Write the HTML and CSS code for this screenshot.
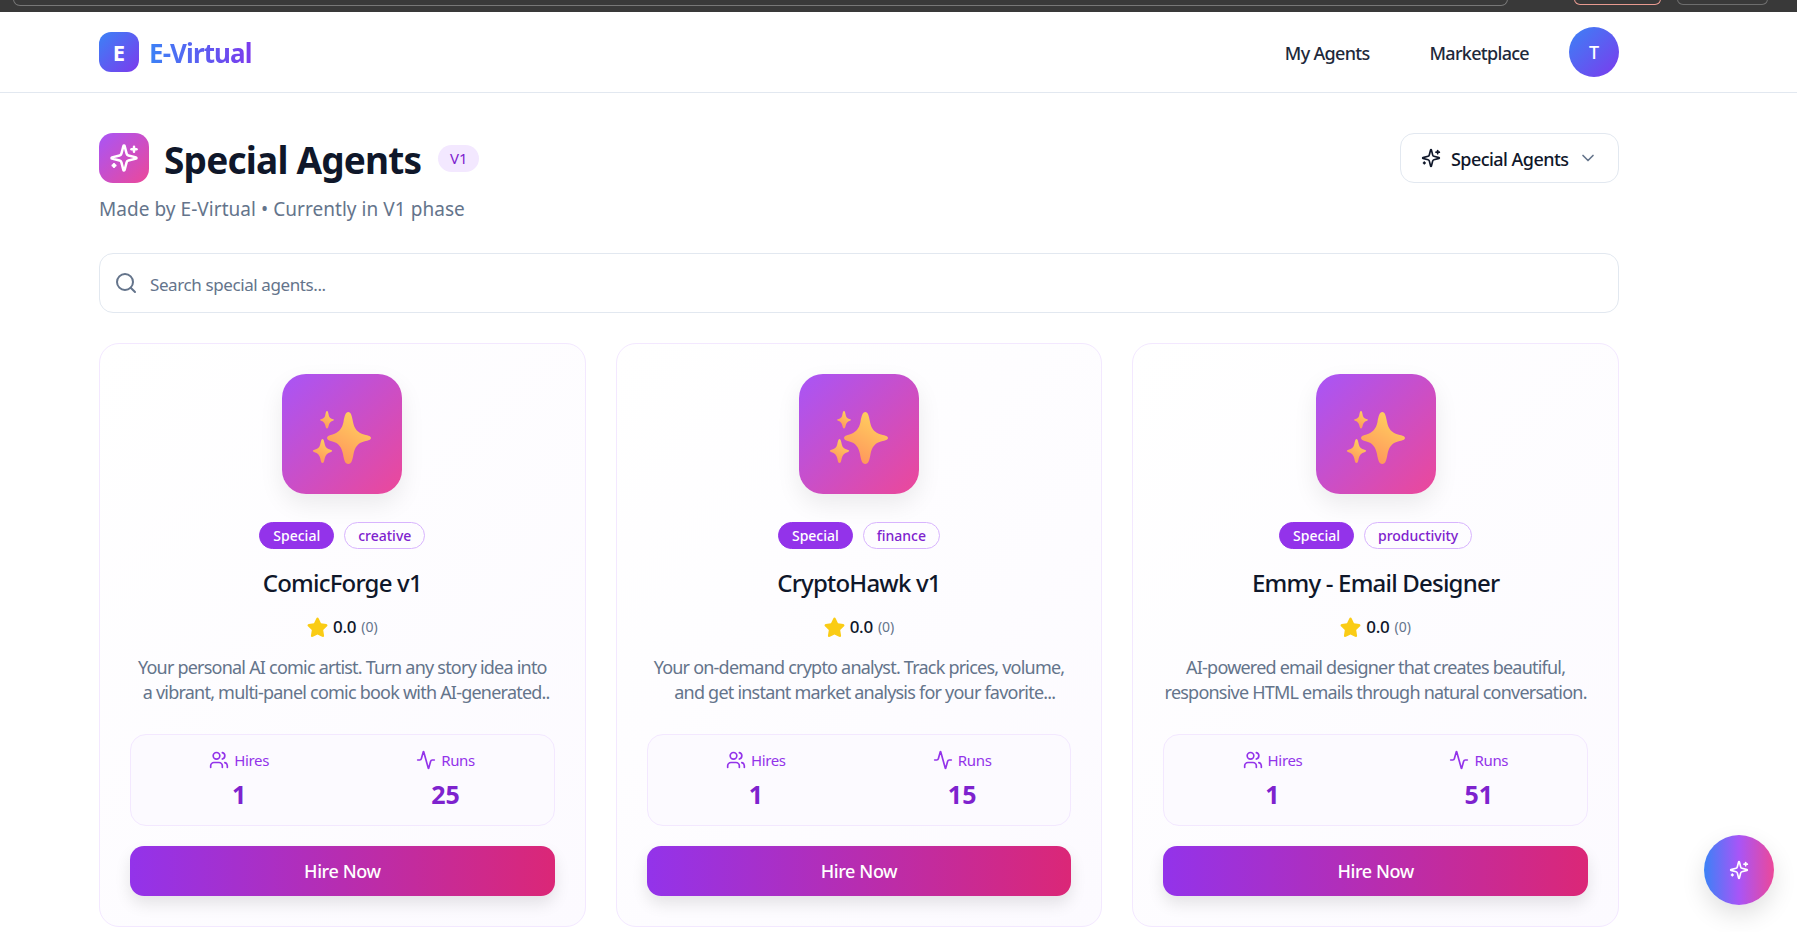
FILE: index.html
```html
<!DOCTYPE html>
<html lang="en">
<head>
    <meta charset="UTF-8">
    <meta name="viewport" content="width=device-width, initial-scale=1.0">
    <title>E-Virtual Special Agents</title>
    <link rel="stylesheet" href="styles.css">
</head>
<body>
    <svg class="icon-defs" width="0" height="0" aria-hidden="true">
        <defs>
            <linearGradient id="sparkle-fill" x1="0.75" y1="0" x2="0.25" y2="1">
                <stop offset="0" stop-color="#ffd35e"/>
                <stop offset="1" stop-color="#ff935c"/>
            </linearGradient>
            <symbol id="i-sparkles" viewBox="0 0 24 24">
                <path d="M9.937 15.5A2 2 0 0 0 8.5 14.063l-6.135-1.582a.5.5 0 0 1 0-.962L8.5 9.936A2 2 0 0 0 9.937 8.5l1.582-6.135a.5.5 0 0 1 .963 0L14.063 8.5A2 2 0 0 0 15.5 9.937l6.135 1.581a.5.5 0 0 1 0 .964L15.5 14.063a2 2 0 0 0-1.437 1.437l-1.582 6.135a.5.5 0 0 1-.963 0z"/>
                <path d="M20 3v4"/><path d="M22 5h-4"/><path d="M4 17v2"/><path d="M5 18H3"/>
            </symbol>
            <symbol id="i-users" viewBox="0 0 24 24">
                <path d="M16 21v-2a4 4 0 0 0-4-4H6a4 4 0 0 0-4 4v2"/><circle cx="9" cy="7" r="4"/>
                <path d="M22 21v-2a4 4 0 0 0-3-3.87"/><path d="M16 3.13a4 4 0 0 1 0 7.75"/>
            </symbol>
            <symbol id="i-activity" viewBox="0 0 24 24">
                <path d="M22 12h-2.48a2 2 0 0 0-1.93 1.46l-2.35 8.36a.25.25 0 0 1-.48 0L9.24 2.18a.25.25 0 0 0-.48 0l-2.35 8.36A2 2 0 0 1 4.49 12H2"/>
            </symbol>
            <symbol id="i-emoji" viewBox="0 0 64 64">
                <path fill="url(#sparkle-fill)" d="M38.3 10C41 10 42 14 43 20C44.5 27 47.5 30.5 54 32.5C59 33.5 61 34.5 61 36C61 37.5 59 38.5 54 39.5C48 41 45 45 43.5 52C42.5 58 41.5 62 38.3 62C35 62 34 58 33 52C31.5 45 28.5 41 22.5 39.5C18.5 38.5 17 37.5 17 36C17 34.5 18.5 33.5 22.5 32.5C28.5 30.5 32 27 33.5 20C34.5 14 35.6 10 38.3 10Z"/>
                <path fill="url(#sparkle-fill)" d="M17 9C18 9 18.3 11 18.8 13.5C19.3 15.8 21 16.8 23 17.3C24.3 17.6 24.3 18.4 23 18.7C21 19.2 19.4 20.5 18.8 23C18.3 25 18 26.5 17 26.5C16 26.5 15.7 25 15.2 23C14.6 20.5 13 19.2 11 18.7C9.7 18.4 9.7 17.6 11 17.3C13 16.8 14.7 15.8 15.2 13.5C15.7 11 16 9 17 9Z"/>
                <path fill="url(#sparkle-fill)" d="M12.5 37C13.8 37 14.2 39.5 14.8 42.5C15.4 45.5 17.5 47 20.5 47.8C22.8 48.4 22.8 49.6 20.5 50.2C17.5 51 15.5 52.8 14.8 56C14.2 59 13.8 61 12.5 61C11.2 61 10.8 59 10.2 56C9.5 52.8 7.5 51 4.5 50.2C2.2 49.6 2.2 48.4 4.5 47.8C7.5 47 9.6 45.5 10.2 42.5C10.8 39.5 11.2 37 12.5 37Z"/>
            </symbol>
            <symbol id="i-star" viewBox="0 0 24 24">
                <path d="M12 1.8c.6 0 1.1.4 1.4 1l2.6 5.5 6 .9c1.3.2 1.8 1.7.9 2.6l-4.4 4.3 1 6.1c.2 1.3-1.1 2.2-2.3 1.6L12 21l-5.2 2.800c-1.2.6-2.5-.3-2.3-1.6l1-6.100-4.400-4.300c-.9-.9-.4-2.400.9-2.600l6-.9 2.600-5.500c.3-.6.8-1 1.400-1z"/>
            </symbol>
        </defs>
    </svg>

    <div class="browser-strip">
        <span class="strip-address"></span>
        <span class="strip-pill strip-pill-red"></span>
        <span class="strip-pill strip-pill-grey"></span>
    </div>

    <header class="topbar">
        <div class="topbar-inner">
            <a class="brand" href="#">
                <span class="brand-mark">E</span>
                <span class="brand-name">E-Virtual</span>
            </a>
            <nav class="nav">
                <a href="#">My Agents</a>
                <a href="#">Marketplace</a>
                <span class="avatar">T</span>
            </nav>
        </div>
    </header>

    <main class="page">
        <div class="page-head">
            <div>
                <div class="title-row">
                    <span class="title-icon"><svg class="line-icon"><use href="#i-sparkles"/></svg></span>
                    <h1>Special Agents</h1>
                    <span class="phase-badge">V1</span>
                </div>
                <p class="subtitle">Made by E-Virtual • Currently in V1 phase</p>
            </div>
            <button class="category-select" type="button">
                <svg class="line-icon select-icon"><use href="#i-sparkles"/></svg>
                <span class="select-text">Special Agents</span>
                <svg class="line-icon select-chevron" viewBox="0 0 24 24"><path d="m6 9 6 6 6-6"/></svg>
            </button>
        </div>

        <label class="search">
            <svg class="line-icon search-icon" viewBox="0 0 24 24"><circle cx="11" cy="11" r="8"/><path d="m21 21-4.3-4.3"/></svg>
            <input type="text" placeholder="Search special agents...">
        </label>

        <section class="agent-grid">
            <article class="agent-card">
                <div class="agent-icon"><svg class="emoji-icon"><use href="#i-emoji"/></svg></div>
                <div class="tags"><span class="tag tag-solid">Special</span><span class="tag">creative</span></div>
                <h2>ComicForge v1</h2>
                <div class="rating"><svg class="star"><use href="#i-star"/></svg><b>0.0</b><small>(0)</small></div>
                <p class="agent-desc">Your personal AI comic artist. Turn any story idea into<br>&nbsp;&nbsp;a vibrant, multi-panel comic book with AI-generated..</p>
                <div class="stats">
                    <div class="stat">
                        <div class="stat-label"><svg class="line-icon"><use href="#i-users"/></svg>Hires</div>
                        <div class="stat-value">1</div>
                    </div>
                    <div class="stat">
                        <div class="stat-label"><svg class="line-icon"><use href="#i-activity"/></svg>Runs</div>
                        <div class="stat-value">25</div>
                    </div>
                </div>
                <button class="hire-btn" type="button">Hire Now</button>
            </article>

            <article class="agent-card">
                <div class="agent-icon"><svg class="emoji-icon"><use href="#i-emoji"/></svg></div>
                <div class="tags"><span class="tag tag-solid">Special</span><span class="tag">finance</span></div>
                <h2>CryptoHawk v1</h2>
                <div class="rating"><svg class="star"><use href="#i-star"/></svg><b>0.0</b><small>(0)</small></div>
                <p class="agent-desc">Your on-demand crypto analyst. Track prices, volume,<br>&nbsp;&nbsp;&nbsp;and get instant market analysis for your favorite...</p>
                <div class="stats">
                    <div class="stat">
                        <div class="stat-label"><svg class="line-icon"><use href="#i-users"/></svg>Hires</div>
                        <div class="stat-value">1</div>
                    </div>
                    <div class="stat">
                        <div class="stat-label"><svg class="line-icon"><use href="#i-activity"/></svg>Runs</div>
                        <div class="stat-value">15</div>
                    </div>
                </div>
                <button class="hire-btn" type="button">Hire Now</button>
            </article>

            <article class="agent-card">
                <div class="agent-icon"><svg class="emoji-icon"><use href="#i-emoji"/></svg></div>
                <div class="tags"><span class="tag tag-solid">Special</span><span class="tag">productivity</span></div>
                <h2>Emmy - Email Designer</h2>
                <div class="rating"><svg class="star"><use href="#i-star"/></svg><b>0.0</b><small>(0)</small></div>
                <p class="agent-desc">AI-powered email designer that creates beautiful,<br>responsive HTML emails through natural conversation.</p>
                <div class="stats">
                    <div class="stat">
                        <div class="stat-label"><svg class="line-icon"><use href="#i-users"/></svg>Hires</div>
                        <div class="stat-value">1</div>
                    </div>
                    <div class="stat">
                        <div class="stat-label"><svg class="line-icon"><use href="#i-activity"/></svg>Runs</div>
                        <div class="stat-value">51</div>
                    </div>
                </div>
                <button class="hire-btn" type="button">Hire Now</button>
            </article>
        </section>
    </main>

    <button class="float-btn" type="button" aria-label="Assistant"><svg class="line-icon"><use href="#i-sparkles"/></svg></button>
</body>
</html>
```

FILE: styles.css
```css
* {
    box-sizing: border-box;
}
html, body {
    height: 100%;
}
body {
    margin: 0;
    overflow: hidden;
    background: #fff;
    color: #0f172a;
    font-family: "Noto Sans", "Open Sans", sans-serif;
}
a {
    color: inherit;
    text-decoration: none;
}
h1, h2, p {
    margin: 0;
}
button {
    font-family: inherit;
    cursor: pointer;
}
.icon-defs {
    display: block;
    height: 0;
}
.line-icon {
    fill: none;
    stroke: currentColor;
    stroke-width: 2;
    stroke-linecap: round;
    stroke-linejoin: round;
    flex: none;
}

.browser-strip {
    display: flex;
    height: 12px;
    overflow: hidden;
    background: #393939;
    padding: 0 29px 0 13px;
}
.strip-address {
    flex: 1;
    height: 7px;
    margin-top: -1px;
    margin-right: 66px;
    border: 1px solid #777;
    border-top: none;
    border-radius: 0 0 14px 14px;
}
.strip-pill {
    height: 6px;
    margin-top: -1px;
    border: 1px solid #6d6d6d;
    border-radius: 0 0 12px 12px;
}
.strip-pill-red {
    width: 87px;
    margin-right: 16px;
    border-color: #e89a90;
}
.strip-pill-grey {
    width: 91px;
}

.topbar {
    height: 81px;
    border-bottom: 1px solid #e2e8f0;
}
.topbar-inner {
    width: 1520px;
    height: 80px;
    margin-left: 99px;
    display: flex;
    align-items: center;
    justify-content: space-between;
}
.brand {
    display: flex;
    align-items: center;
    gap: 10px;
}
.brand-mark {
    width: 40px;
    height: 40px;
    border-radius: 12px;
    display: flex;
    align-items: center;
    justify-content: center;
    background: linear-gradient(135deg, #3b82f6, #7c3aed);
    color: #fff;
    font-size: 22px;
    font-weight: 700;
}
.brand-name {
    padding-top: 2px;
    font-size: 26px;
    font-weight: 700;
    letter-spacing: -0.9px;
    background: linear-gradient(90deg, #3b82f6, #7c3aed);
    -webkit-background-clip: text;
    background-clip: text;
    color: transparent;
}
.nav {
    display: flex;
    align-items: center;
    gap: 60px;
    font-size: 18px;
    font-weight: 500;
    letter-spacing: -0.7px;
    color: #1e293b;
}
.nav a {
    padding-top: 2px;
}
.nav .avatar {
    margin-left: -20px;
}
.avatar {
    width: 50px;
    height: 50px;
    border-radius: 50%;
    display: flex;
    align-items: center;
    justify-content: center;
    background: linear-gradient(135deg, #3b82f6, #7c3aed);
    color: #fff;
    font-size: 18px;
    letter-spacing: 0;
}

.page {
    width: 1520px;
    margin-left: 99px;
    padding-top: 40px;
}
.page-head {
    display: flex;
    justify-content: space-between;
    align-items: flex-start;
}
.title-row {
    display: flex;
    align-items: center;
    height: 50px;
}
.title-icon {
    width: 50px;
    height: 50px;
    border-radius: 14px;
    display: flex;
    align-items: center;
    justify-content: center;
    color: #fff;
    background: linear-gradient(135deg, #a855f7, #ec4899);
}
.title-icon .line-icon {
    width: 30px;
    height: 30px;
}
h1 {
    margin-left: 15px;
    padding-top: 4px;
    font-size: 37px;
    font-weight: 700;
    line-height: 46px;
    letter-spacing: -0.8px;
    color: #0f172a;
}
.phase-badge {
    margin-left: 17px;
    height: 27px;
    width: 41px;
    border-radius: 14px;
    display: flex;
    align-items: center;
    justify-content: center;
    background: #f3e8ff;
    color: #7e22ce;
    font-size: 15px;
}
.subtitle {
    margin-top: 14px;
    font-size: 19px;
    line-height: 24px;
    letter-spacing: 0.05px;
    color: #64748b;
}
.category-select {
    width: 219px;
    height: 50px;
    display: flex;
    align-items: center;
    padding: 0 0 0 20px;
    background: #fff;
    border: 1px solid #e2e8f0;
    border-radius: 14px;
    color: #0f172a;
    font-size: 18px;
    font-weight: 500;
    letter-spacing: -0.55px;
}
.select-text {
    padding-top: 2px;
}
.select-icon {
    width: 20px;
    height: 20px;
    margin-right: 10px;
}
.select-chevron {
    width: 20px;
    height: 20px;
    margin-left: 10px;
    color: #64748b;
}

.search {
    margin-top: 32px;
    height: 60px;
    display: flex;
    align-items: center;
    padding: 0 14px;
    border: 1px solid #e2e8f0;
    border-radius: 14px;
    background: #fff;
}
.search-icon {
    width: 24px;
    height: 24px;
    color: #64748b;
    margin-right: 12px;
}
.search input {
    flex: 1;
    padding: 2px 0 0;
    border: none;
    outline: none;
    background: none;
    font-family: inherit;
    font-size: 17px;
    letter-spacing: -0.4px;
}
.search input::placeholder {
    color: #64748b;
    opacity: 1;
}

.agent-grid {
    margin-top: 30px;
    display: grid;
    grid-template-columns: repeat(3, minmax(0, 1fr));
    gap: 30px;
}
.agent-card {
    height: 584px;
    padding: 30px 30px 0;
    border: 1px solid #f3e8ff;
    border-radius: 20px;
    background: linear-gradient(135deg, #fff, #fcfaff);
    display: flex;
    flex-direction: column;
    align-items: center;
}
.agent-icon {
    width: 120px;
    height: 120px;
    border-radius: 24px;
    background: linear-gradient(135deg, #a855f7, #ec4899);
    box-shadow: 0 10px 25px rgba(0, 0, 0, 0.08);
    display: flex;
    align-items: center;
    justify-content: center;
}
.emoji-icon {
    width: 64px;
    height: 64px;
}
.tags {
    margin-top: 28px;
    display: flex;
    gap: 10px;
}
.tag {
    height: 27px;
    padding: 0 13px;
    border: 1px solid #d8b4fe;
    border-radius: 14px;
    display: flex;
    align-items: center;
    color: #7e22ce;
    font-size: 14px;
    font-weight: 500;
}
.tag-solid {
    background: #9333ea;
    border-color: #9333ea;
    color: #fff;
}
.agent-card h2 {
    margin-top: 17px;
    font-size: 24px;
    font-weight: 500;
    line-height: 34px;
    letter-spacing: -0.8px;
    color: #0f172a;
}
.rating {
    margin-top: 13px;
    height: 26px;
    display: flex;
    align-items: center;
    gap: 5px;
}
.star {
    width: 21px;
    height: 21px;
    fill: #facc15;
}
.rating b {
    font-size: 17px;
    font-weight: 500;
    letter-spacing: -0.3px;
}
.rating small {
    font-size: 14px;
    color: #64748b;
}
.agent-desc {
    margin-top: 16px;
    font-size: 18px;
    line-height: 25px;
    letter-spacing: -0.78px;
    color: #64748b;
    text-align: center;
    white-space: nowrap;
}
.stats {
    align-self: stretch;
    margin-top: 29px;
    height: 92px;
    padding: 12px 5px 0;
    border: 1px solid #f3e8ff;
    border-radius: 16px;
    background: #fcfaff;
    display: grid;
    grid-template-columns: 1fr 1fr;
}
.stat {
    display: flex;
    flex-direction: column;
    align-items: center;
}
.stat-label {
    display: flex;
    align-items: center;
    gap: 5px;
    height: 26px;
    color: #9333ea;
    font-size: 15px;
    letter-spacing: -0.35px;
}
.stat-label .line-icon {
    width: 20px;
    height: 20px;
}
.stat-value {
    margin-top: 3px;
    font-size: 25px;
    font-weight: 700;
    line-height: 36px;
    color: #7e22ce;
}
.hire-btn {
    align-self: stretch;
    margin-top: 20px;
    height: 50px;
    border: none;
    border-radius: 14px;
    color: #fff;
    font-size: 18px;
    font-weight: 500;
    letter-spacing: -0.4px;
    background: linear-gradient(90deg, #9333ea, #db2777);
    box-shadow: 0 8px 16px rgba(0, 0, 0, 0.1);
}

.float-btn {
    position: fixed;
    left: 1704px;
    top: 835px;
    width: 70px;
    height: 70px;
    padding: 0;
    border: none;
    border-radius: 50%;
    display: flex;
    align-items: center;
    justify-content: center;
    color: #fff;
    background: linear-gradient(90deg, #3b82f6, #a855f7, #ec4899);
    box-shadow: 0 10px 25px rgba(0, 0, 0, 0.12);
}
.float-btn .line-icon {
    width: 20px;
    height: 20px;
}
```
